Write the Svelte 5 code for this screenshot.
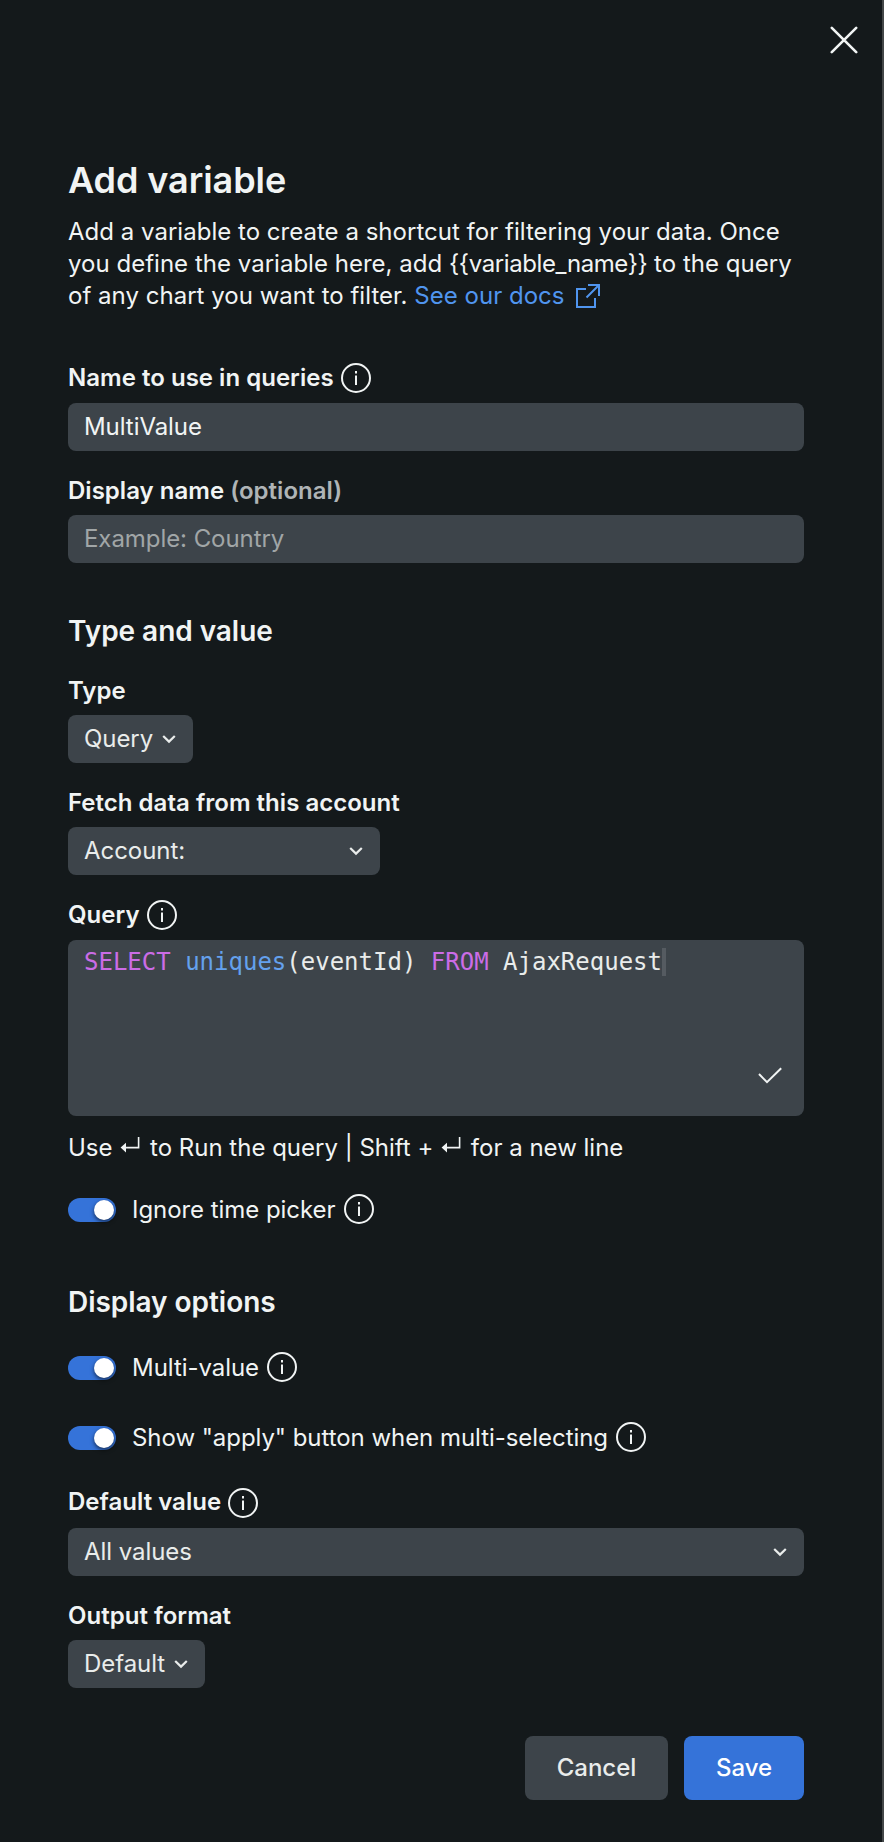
<script>
  let name = $state('MultiValue');
  let displayName = $state('');
  let ignoreTime = $state(true);
  let multi = $state(true);
  let showApply = $state(true);
</script>

{#snippet info()}
  <svg class="info" viewBox="0 0 30 30" width="30" height="30" fill="none" stroke="currentColor" stroke-width="2">
    <circle cx="15" cy="15" r="14" />
    <path d="M15 12.5V22M15 8v2.4" />
  </svg>
{/snippet}

{#snippet chevron()}
  <svg class="chevron" viewBox="0 0 16 16" width="16" height="16" fill="none" stroke="currentColor" stroke-width="2.2">
    <path d="M2.2 5 8 10.6 13.8 5" />
  </svg>
{/snippet}

{#snippet enter()}
  <svg class="enter" viewBox="0 0 20 18" width="20" height="18">
    <path d="M18.6 1v10.6H5" fill="none" stroke="currentColor" stroke-width="1.6" />
    <path d="M.6 11.6 6 6.8v9.6z" fill="currentColor" />
  </svg>
{/snippet}

{#snippet toggle(on, flip)}
  <button class="toggle" class:on role="switch" aria-checked={on} onclick={flip}><span class="thumb"></span></button>
{/snippet}

<main class="panel">
  <header class="bar">
    <button class="close">
      <svg viewBox="0 0 28 28" width="28" height="28" fill="none" stroke="currentColor" stroke-width="2.6" stroke-linecap="round">
        <path d="M1.8 1.8 26.2 26.2M26.2 1.8 1.8 26.2" />
      </svg>
    </button>
  </header>

  <h1>Add variable</h1>
  <p class="intro">
    Add a variable to create a shortcut for filtering your data. Once<br />
    you define the variable here, add <span class="token">{'{{variable_name}}'}</span> to the query<br />
    of any chart you want to filter. <a href="#docs">See our docs<svg class="external" viewBox="0 0 24 24" width="24" height="24" fill="none" stroke="currentColor" stroke-width="2"><path d="M10 5H1v18h18V14M12 1h11v11M23 1 10.5 13.5" /></svg></a>
  </p>

  <div class="label first"><span>Name to use in queries</span>{@render info()}</div>
  <input class="field" bind:value={name} />

  <div class="label"><span>Display name <em>(optional)</em></span></div>
  <input class="field" placeholder="Example: Country" bind:value={displayName} />

  <h2 class="type-title">Type and value</h2>
  <div class="label tight"><span>Type</span></div>
  <button class="field select type">Query{@render chevron()}</button>

  <div class="label"><span>Fetch data from this account</span></div>
  <button class="field select account">Account:{@render chevron()}</button>

  <div class="label with-icon"><span>Query</span>{@render info()}</div>
  <div class="editor">
    <code><b>SELECT</b>{' '}<i>uniques</i>(eventId) <b>FROM</b> AjaxRequest<span class="cursor"></span></code>
    <svg class="check" viewBox="0 0 24 18" width="24" height="18" fill="none" stroke="currentColor" stroke-width="2">
      <path d="M1 7 9 15.2 23.2 1.2" />
    </svg>
  </div>
  <div class="hint">Use {@render enter()} to Run the query | Shift + {@render enter()} for a new line</div>

  <div class="option ignore">
    {@render toggle(ignoreTime, () => (ignoreTime = !ignoreTime))}<span>Ignore time picker</span>{@render info()}
  </div>

  <h2 class="display-title">Display options</h2>
  <div class="option multi">
    {@render toggle(multi, () => (multi = !multi))}<span>Multi-value</span>{@render info()}
  </div>
  <div class="option apply">
    {@render toggle(showApply, () => (showApply = !showApply))}<span>Show "apply" button when multi-selecting</span>{@render info()}
  </div>

  <div class="label default"><span>Default value</span>{@render info()}</div>
  <button class="field select">All values{@render chevron()}</button>

  <div class="label"><span>Output format</span></div>
  <button class="field select output">Default{@render chevron()}</button>

  <footer>
    <button class="action cancel">Cancel</button>
    <button class="action save">Save</button>
  </footer>
</main>

<style>
  :global(body) { background: #14191b; }
  * { box-sizing: border-box; }
  .panel {
    width: 884px;
    height: 1842px;
    padding: 0 78px 0 68px;
    border-right: 2px solid #434748;
    background: #14191b;
    color: #f1f4f4;
    font: 400 24px/32px Inter, sans-serif;
    letter-spacing: 0;
    overflow: hidden;
  }
  button, input { font: inherit; letter-spacing: inherit; color: inherit; border: 0; margin: 0; padding: 0; outline: 0; }
  svg { display: block; flex: none; }
  .bar { display: flex; justify-content: flex-end; height: 156px; padding-top: 26px; margin-right: -54px; }
  .close { width: 28px; height: 28px; background: none; }
  h1 { margin: 0 0 12px; font-size: 36px; line-height: 48px; font-weight: 600; letter-spacing: -0.08px; }
  h2 { margin: 0; font-size: 28px; line-height: 40px; font-weight: 600; letter-spacing: -0.04px; }
  .intro { margin: 0; height: 96px; white-space: nowrap; letter-spacing: 0.02px; }
  .token { letter-spacing: -0.4px; }
  a { color: #5095ef; text-decoration: none; }
  .external { display: inline-block; margin-left: 11px; vertical-align: -4px; }
  .label { display: flex; gap: 7px; align-items: center; height: 32px; margin: 24px 0 8px; font-weight: 600; white-space: nowrap; letter-spacing: 0.02px; }
  em { font-style: normal; color: #afb4b6; }
  .first { margin-top: 50px; margin-bottom: 9px; }
  .field { display: flex; align-items: center; width: 736px; height: 48px; padding: 0 16px; border-radius: 8px; background: #3d444a; letter-spacing: -0.06px; }
  input.field { padding-bottom: 2px; }
  .field::placeholder { color: #a1a6a7; opacity: 1; }
  .select { justify-content: space-between; color: #e9eceb; }
  .type { width: 125px; }
  .account { width: 312px; }
  .output { width: 137px; }
  .type-title { margin-top: 48px; }
  .with-icon { margin-bottom: 9px; }
  .editor { width: 736px; height: 176px; padding: 8px 22px 31px 16px; border-radius: 8px; background: #3d444a; display: flex; flex-direction: column; justify-content: space-between; }
  code { display: block; white-space: pre; height: 28px; font: 24px/28px "DejaVu Sans Mono", monospace; color: #e9eceb; }
  b { font-weight: 400; color: #cb6ce6; }
  i { font-style: normal; color: #64a1ed; }
  .cursor { display: inline-block; vertical-align: top; width: 4px; height: 28px; background: #555b61; }
  .check { align-self: flex-end; }
  .hint { height: 32px; margin-top: 16px; white-space: nowrap; }
  .enter { display: inline-block; margin: 0 3px 0 1px; vertical-align: 2px; }
  .option { display: flex; align-items: center; height: 32px; white-space: nowrap; letter-spacing: -0.05px; }
  .option .info { margin: -2px 0 0 8px; }
  .ignore { margin-top: 30px; }
  .display-title { margin-top: 56px; }
  .multi { margin-top: 30px; }
  .apply { margin-top: 38px; }
  .toggle { display: flex; justify-content: flex-end; align-items: center; flex: none; width: 48px; height: 24px; margin-right: 16px; padding: 2px; border-radius: 12px; background: #3573d9; }
  .thumb { width: 20px; height: 20px; border-radius: 50%; background: #fff; box-shadow: 0 2px 4px #0009; }
  .default { margin-top: 33px; margin-bottom: 9px; }
  .default span { padding-bottom: 2px; }
  footer { display: flex; justify-content: flex-end; gap: 16px; margin-top: 48px; }
  .action { height: 64px; border-radius: 8px; font-weight: 500; }
  .cancel { width: 143px; background: #3d444a; color: #e9eceb; }
  .save { width: 120px; background: #3573d9; color: #fff; }
</style>
